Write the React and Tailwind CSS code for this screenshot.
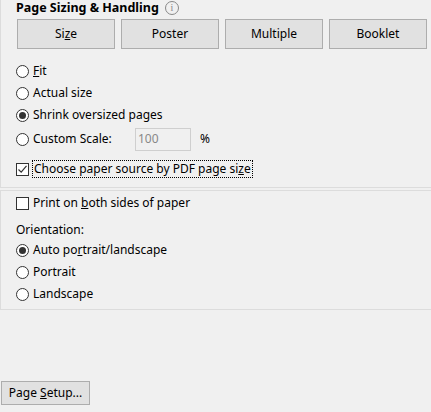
export default function App() {
  const Radio = ({ checked }) => (
    <span className="w-[13px] h-[13px] rounded-full border border-[#333] bg-white flex items-center justify-center shrink-0">
      {checked && <span className="w-[7px] h-[7px] rounded-full bg-[#333]" />}
    </span>
  );
  const Box = ({ checked }) => (
    <span className="w-[13px] h-[13px] border border-[#333] bg-white flex items-center justify-center shrink-0">
      {checked && (
        <svg width="11" height="11" viewBox="0 0 11 11"><path d="M1.5 5.5 L4.2 8.2 L9.5 1.8" stroke="#333" strokeWidth="1.2" fill="none" /></svg>
      )}
    </span>
  );
  const Btn = ({ children }) => (
    <div className="w-[98px] h-[30px] border border-[#adadad] bg-[#e1e1e1] flex items-center justify-center">{children}</div>
  );
  return (
    <div className="w-[431px] h-[412px] bg-[#f0f0f0] text-[12px] text-black overflow-hidden flex flex-col" style={{ fontFamily: '"Noto Sans", "Open Sans", sans-serif' }}>
      <div className="h-[188px] border-l border-b border-[#dcdcdc] pl-[15px] flex flex-col">
        <div className="flex items-center gap-[6px] font-bold text-[12.5px] h-[16px] leading-[16px]">
          Page Sizing &amp; Handling
          <span className="w-[14px] h-[14px] rounded-full border border-[#888] text-[#888] text-[10px] font-normal flex items-center justify-center" style={{ fontFamily: '"Liberation Serif", serif' }}>i</span>
        </div>
        <div className="flex gap-[6px] mt-[3px] ml-[1px]">
          <Btn><span>Si<u>z</u>e</span></Btn>
          <Btn>Poster</Btn>
          <Btn>Multiple</Btn>
          <Btn>Booklet</Btn>
        </div>
        <div className="flex flex-col mt-[11px]">
          <div className="flex items-center gap-[4px] h-[22px]"><Radio /><span><u>F</u>it</span></div>
          <div className="flex items-center gap-[4px] h-[22px]"><Radio /><span>Actual size</span></div>
          <div className="flex items-center gap-[4px] h-[22px]"><Radio checked /><span>Shrink oversized pages</span></div>
          <div className="flex items-center gap-[4px] h-[24px] mt-[1px]">
            <Radio /><span className="w-[98px]">Custom Scale:</span>
            <div className="w-[56px] h-[23px] border border-[#cfcfcf] bg-[#f0f0f0] text-[#888] pl-[2px] leading-[20px]">100</div>
            <span className="ml-[5px]">%</span>
          </div>
          <div className="flex items-center gap-[3px] h-[22px] mt-[7px]">
            <Box checked />
            <span className="border border-dotted border-black px-[1px] leading-[16px]">Choose paper source by PDF page si<u>z</u>e</span>
          </div>
        </div>
      </div>
      <div className="h-[120px] mt-[2px] border-l border-t border-b border-[#dcdcdc] pl-[15px] pt-[1px] flex flex-col">
        <div className="flex items-center gap-[4px] h-[22px]"><Box /><span>Print on <u>b</u>oth sides of paper</span></div>
        <div className="mt-[8px] h-[16px] leading-[16px]">Orientation:</div>
        <div className="flex items-center gap-[4px] h-[22px] mt-[1px]"><Radio checked /><span>Auto po<u>r</u>trait/landscape</span></div>
        <div className="flex items-center gap-[4px] h-[22px]"><Radio /><span>Portrait</span></div>
        <div className="flex items-center gap-[4px] h-[22px]"><Radio /><span>Landscape</span></div>
      </div>
      <div className="mt-[71px] ml-[1px] w-[89px] h-[24px] border border-[#adadad] bg-[#e1e1e1] flex items-center justify-center">
        <span>Page <u>S</u>etup...</span>
      </div>
    </div>
  );
}
